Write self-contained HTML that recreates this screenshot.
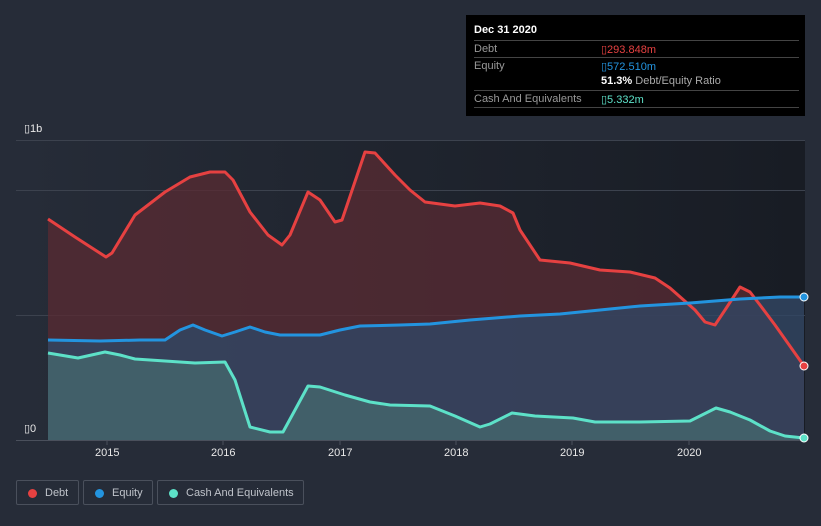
<!DOCTYPE html>
<html><head><meta charset="utf-8"><style>
body{margin:0;width:821px;height:526px;background:#262c38;font-family:"Liberation Sans",sans-serif;overflow:hidden;position:relative}
.tt{position:absolute;left:466px;top:15px;width:339px;height:101px;background:#000;color:#fff;font-size:11px}
.tt .h{position:absolute;left:8px;top:9px;font-weight:bold}
.tt .r{position:absolute;left:8px;right:6px;border-top:1px solid #444;height:17px}
.tt .l{position:absolute;left:0;top:2px;color:#999}
.tt .v{position:absolute;left:127px;top:2px}
.lg{position:absolute;top:480px;height:25px;border:1px solid #4a505c;border-radius:2px;color:#bfc3ca;font-size:11px;line-height:25px;box-sizing:border-box}
.lg i{position:absolute;left:11px;top:8px;width:9px;height:9px;border-radius:50%}
.lg span{position:absolute;left:28px}
.ax{position:absolute;color:#e8e8e8;font-size:11px}
</style></head><body>
<svg width="821" height="526" style="position:absolute;left:0;top:0">
<defs><linearGradient id="bg" x1="0" y1="0" x2="1" y2="0"><stop offset="0" stop-color="#262c38"/><stop offset="1" stop-color="#181c24"/></linearGradient></defs>
<rect x="16" y="140" width="789" height="300" fill="url(#bg)"/>
<g stroke="#3c424e" stroke-width="1">
<line x1="16" y1="140.5" x2="805" y2="140.5"/><line x1="16" y1="190.5" x2="805" y2="190.5"/><line x1="16" y1="315.5" x2="805" y2="315.5"/><line x1="16" y1="440.5" x2="805" y2="440.5" stroke="#4a505c"/>
</g>
<polygon fill="#5a2b33" fill-opacity="0.75" points="48,440 48,219 75,237 106,257 112,253 135,215 165,192 190,177 210,172 225,172 233,180 250,212 268,235 282,245 290,235 308,192 320,200 335,222 342,220 365,152 375,153 395,175 410,190 425,202 455,206 480,203 500,206 513,213 520,230 540,260 570,263 600,270 630,272 655,278 670,288 695,310 705,322 715,325 725,310 740,287 750,292 760,305 775,325 804,366 804,440"/>
<polygon fill="#1c4a6a" fill-opacity="0.55" points="48,440 48,340 100,341 140,340 165,340 180,330 193,325 205,330 222,336 235,332 250,327 265,332 280,335 320,335 340,330 360,326 400,325 430,324 470,320 520,316 560,314 600,310 640,306 690,303 740,299 780,297 804,297 804,440"/>
<polygon fill="#3a4560" fill-opacity="0.6" points="48,440 48,340 100,341 140,340 165,340 180,330 193,325 205,330 222,336 235,332 250,327 265,332 280,335 320,335 340,330 360,326 400,325 430,324 470,320 520,316 560,314 600,310 640,306 690,303 740,299 780,297 804,297 804,440"/>
<polygon fill="#45676d" fill-opacity="0.8" points="48,440 48,353 78,358 105,352 120,355 135,359 165,361 195,363 225,362 235,380 250,427 270,432 283,432 295,410 308,386 320,387 345,395 370,402 390,405 430,406 455,416 480,427 490,424 512,413 535,416 573,418 595,422 640,422 690,421 700,416 716,408 730,412 750,420 770,431 785,436 804,438 804,440"/>
<g fill="none" stroke-width="3" stroke-linejoin="round">
<polyline stroke="#e64141" points="48,219 75,237 106,257 112,253 135,215 165,192 190,177 210,172 225,172 233,180 250,212 268,235 282,245 290,235 308,192 320,200 335,222 342,220 365,152 375,153 395,175 410,190 425,202 455,206 480,203 500,206 513,213 520,230 540,260 570,263 600,270 630,272 655,278 670,288 695,310 705,322 715,325 725,310 740,287 750,292 760,305 775,325 804,366"/>
<polyline stroke="#2394df" points="48,340 100,341 140,340 165,340 180,330 193,325 205,330 222,336 235,332 250,327 265,332 280,335 320,335 340,330 360,326 400,325 430,324 470,320 520,316 560,314 600,310 640,306 690,303 740,299 780,297 804,297"/>
<polyline stroke="#5de1c8" points="48,353 78,358 105,352 120,355 135,359 165,361 195,363 225,362 235,380 250,427 270,432 283,432 295,410 308,386 320,387 345,395 370,402 390,405 430,406 455,416 480,427 490,424 512,413 535,416 573,418 595,422 640,422 690,421 700,416 716,408 730,412 750,420 770,431 785,436 804,438"/>
</g>
<circle cx="804" cy="297" r="4" fill="#2394df" stroke="#fff" stroke-width="1"/>
<circle cx="804" cy="366" r="4" fill="#e64141" stroke="#fff" stroke-width="1"/>
<circle cx="804" cy="438" r="4" fill="#5de1c8" stroke="#fff" stroke-width="1"/>
<g stroke="#4a505c"><line x1="107" y1="440" x2="107" y2="445"/><line x1="223" y1="440" x2="223" y2="445"/><line x1="340" y1="440" x2="340" y2="445"/><line x1="456" y1="440" x2="456" y2="445"/><line x1="572" y1="440" x2="572" y2="445"/><line x1="689" y1="440" x2="689" y2="445"/></g>
</svg>
<div class="ax" style="left:24px;top:122px">▯1b</div>
<div class="ax" style="left:24px;top:422px">▯0</div>
<div class="ax" style="left:95px;top:447px">2015</div>
<div class="ax" style="left:211px;top:447px">2016</div>
<div class="ax" style="left:328px;top:447px">2017</div>
<div class="ax" style="left:444px;top:447px">2018</div>
<div class="ax" style="left:560px;top:447px">2019</div>
<div class="ax" style="left:677px;top:447px">2020</div>
<div class="tt">
<div class="h">Dec 31 2020</div>
<div class="r" style="top:25px"><span class="l">Debt</span><span class="v" style="color:#e64141">▯293.848m</span></div>
<div class="r" style="top:42px"><span class="l">Equity</span><span class="v" style="color:#2394df">▯572.510m</span></div>
<div style="position:absolute;left:135px;top:60px"><b>51.3%</b> <span style="color:#aaa">Debt/Equity Ratio</span></div>
<div class="r" style="top:75px"><span class="l">Cash And Equivalents</span><span class="v" style="color:#5de1c8">▯5.332m</span></div>
<div class="r" style="top:92px;height:0"></div>
</div>
<div class="lg" style="left:16px;width:63px"><i style="background:#e64141"></i><span>Debt</span></div>
<div class="lg" style="left:83px;width:70px"><i style="background:#2394df"></i><span>Equity</span></div>
<div class="lg" style="left:157px;width:147px"><i style="background:#5de1c8"></i><span>Cash And Equivalents</span></div>
</body></html>
